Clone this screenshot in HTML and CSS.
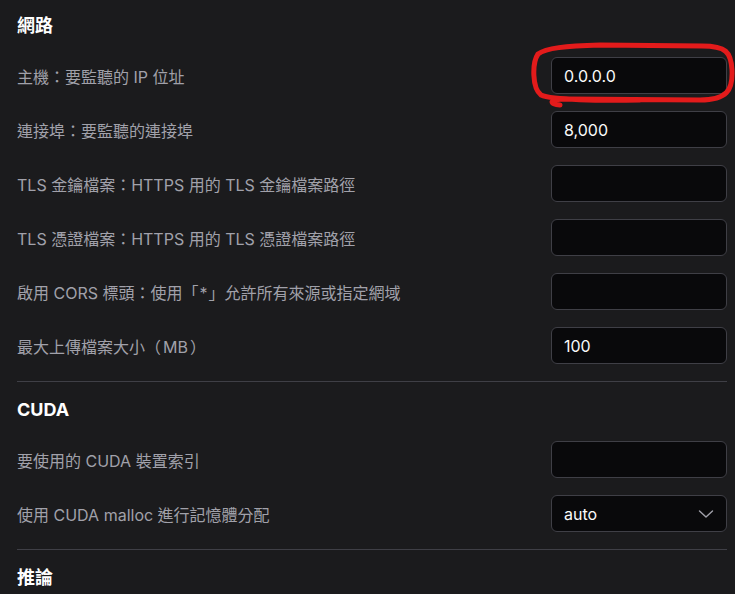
FILE: index.html
```html
<!DOCTYPE html>
<html lang="zh-Hant">
<head>
<meta charset="utf-8">
<title>設定</title>
<link rel="stylesheet" href="styles.css">
</head>
<body>
<div class="page">
  <section class="section">
    <h2 class="section-title">網路</h2>
    <div class="rows">
      <div class="row"><span class="label">主機：要監聽的 IP 位址</span><div class="field">0.0.0.0</div></div>
      <div class="row"><span class="label">連接埠：要監聽的連接埠</span><div class="field">8,000</div></div>
      <div class="row"><span class="label">TLS 金鑰檔案：HTTPS 用的 TLS 金鑰檔案路徑</span><div class="field"></div></div>
      <div class="row"><span class="label">TLS 憑證檔案：HTTPS 用的 TLS 憑證檔案路徑</span><div class="field"></div></div>
      <div class="row"><span class="label">啟用 CORS 標頭：使用「<span class="inner tight">*</span>」允許所有來源或指定網域</span><div class="field"></div></div>
      <div class="row"><span class="label">最大上傳檔案大小（<span class="inner">MB</span>）</span><div class="field">100</div></div>
    </div>
  </section>
  <hr class="divider">
  <section class="section">
    <h2 class="section-title">CUDA</h2>
    <div class="rows">
      <div class="row"><span class="label">要使用的 CUDA 裝置索引</span><div class="field"></div></div>
      <div class="row"><span class="label">使用 CUDA malloc 進行記憶體分配</span>
        <div class="field select"><span>auto</span>
          <svg class="chev" width="16" height="16" viewBox="0 0 16 16"><path d="M1.5 5 L8 11 L14.5 5" fill="none" stroke="#a1a1aa" stroke-width="1.4" stroke-linecap="round" stroke-linejoin="round"/></svg>
        </div>
      </div>
    </div>
  </section>
  <hr class="divider">
  <section class="section">
    <h2 class="section-title">推論</h2>
  </section>
</div>
<svg class="annot" width="735" height="594" viewBox="0 0 735 594">
  <path d="M 560 105 C 549 104, 548 99, 566 99 L 700 100 C 727 100, 733 90, 732 70 C 731 52, 726 46, 702 46 L 600 45 C 565 46, 546 48, 538 54 C 532 63, 532 88, 541 95 C 552 100, 600 101, 640 100" fill="none" stroke="#e31b1b" stroke-width="5" stroke-linecap="round" stroke-linejoin="round"/>
</svg>
</body>
</html>
```
FILE: styles.css
```css
html, body {
  margin: 0;
  padding: 0;
  background: #1b1b1d;
  height: 100%;
  overflow: hidden;
}
body {
  font-family: Inter, "Noto Sans CJK TC", sans-serif;
  color: #a1a1aa;
  position: relative;
}
.page {
  padding: 12px 8px 0 17px;
}
.section-title {
  margin: 0 0 17px 0;
  font-size: 18px;
  line-height: 28px;
  font-weight: 700;
  color: #ffffff;
}
.rows {
  display: flex;
  flex-direction: column;
  gap: 17px;
}
.row {
  display: flex;
  align-items: center;
  justify-content: space-between;
  height: 37px;
}
.label {
  font-size: 16px;
  color: #a1a1aa;
}
.inner {
  display: inline-block;
  margin: 0 2px;
}
.inner.tight {
  margin: 0 1px;
}
.field {
  box-sizing: border-box;
  width: 176px;
  height: 37px;
  border: 1px solid #3f3f46;
  border-radius: 6px;
  background: #09090b;
  color: #fafafa;
  font-size: 16px;
  display: flex;
  align-items: center;
  padding: 0 12px;
}
.select {
  justify-content: space-between;
  padding-right: 12px;
}
.chev {
  display: block;
}
.divider {
  border: 0;
  border-top: 1px solid #3f3f46;
  margin: 17px 0 14px 0;
}
.annot {
  position: absolute;
  left: 0;
  top: 0;
  pointer-events: none;
}
```
